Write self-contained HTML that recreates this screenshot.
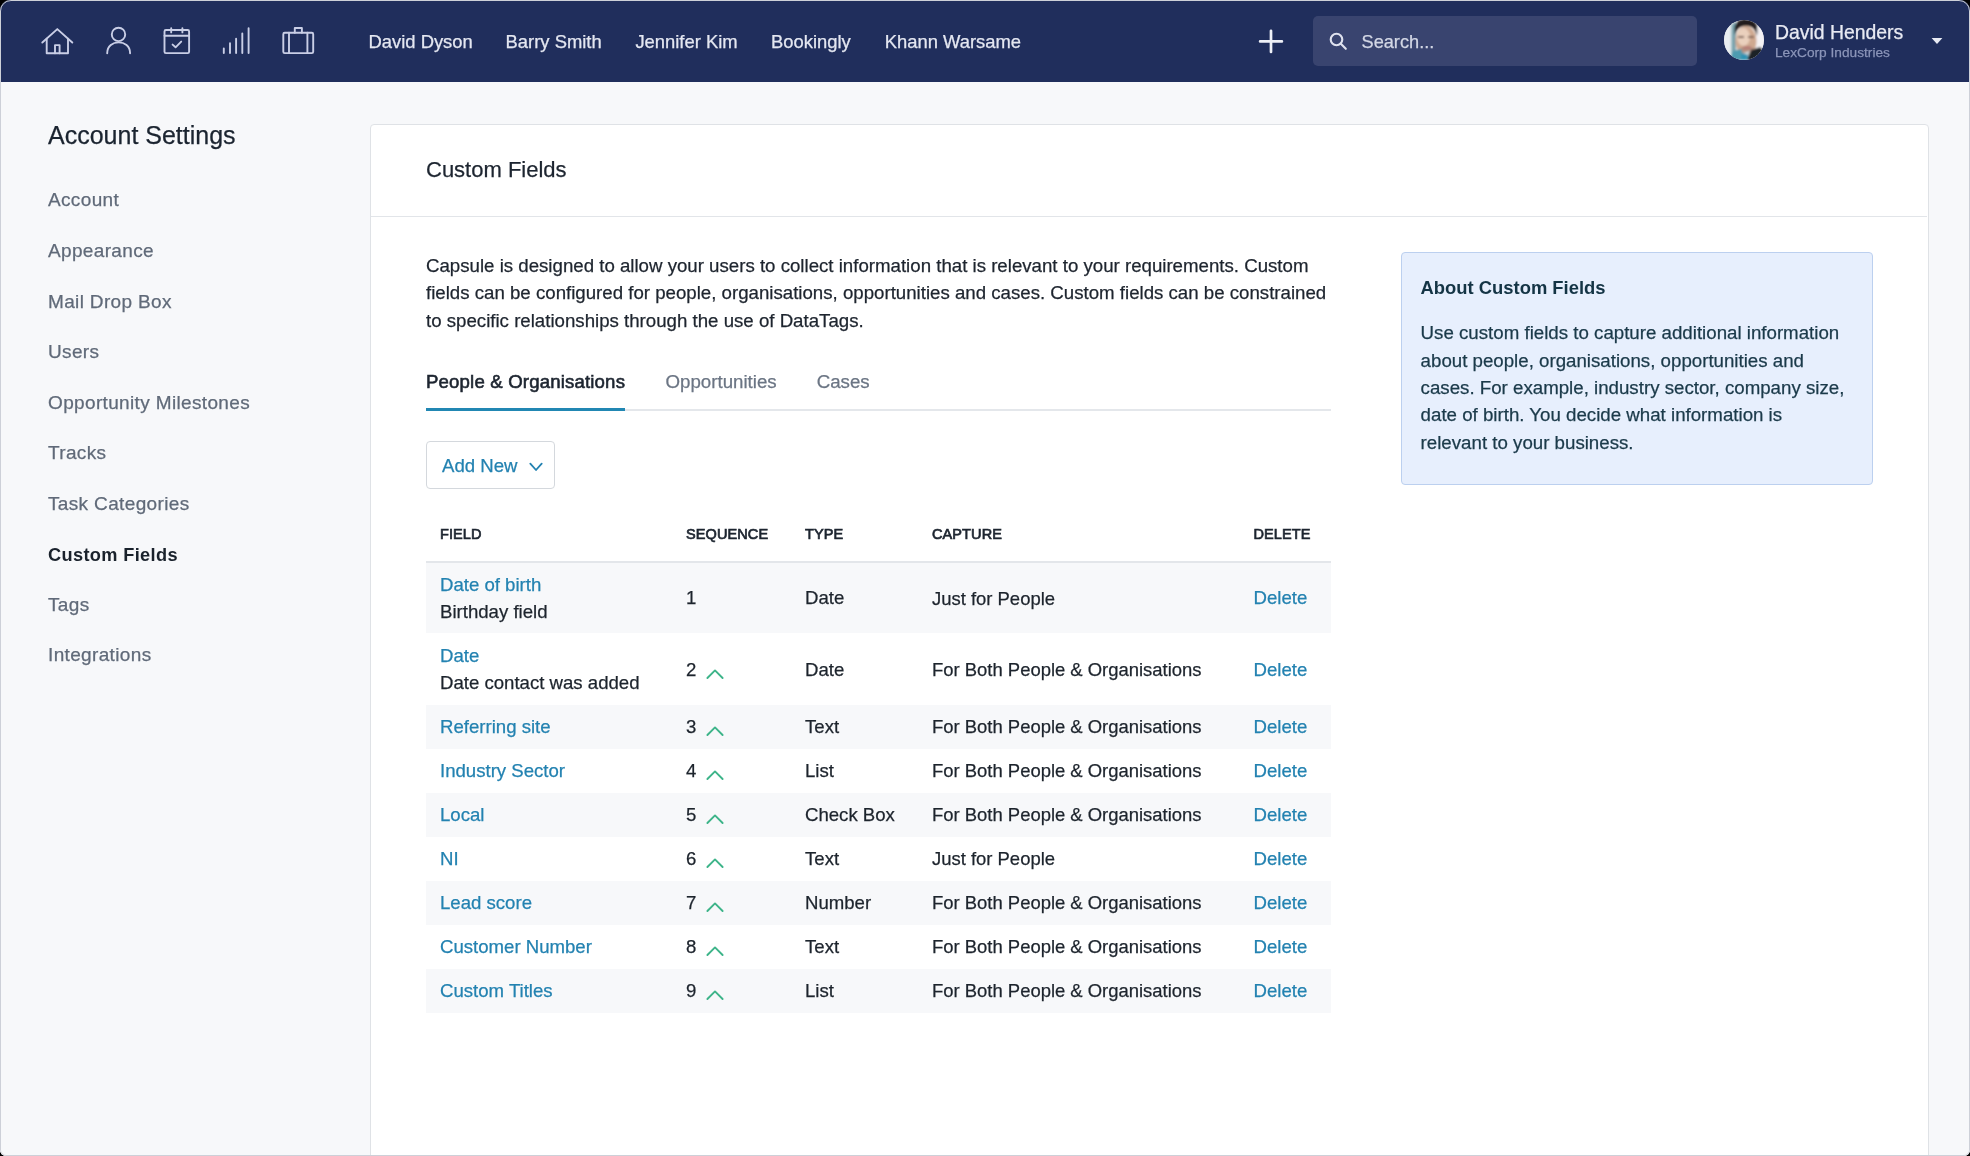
<!DOCTYPE html>
<html><head><meta charset="utf-8"><style>
html,body{margin:0;padding:0;background:#000;width:1970px;height:1156px;overflow:hidden}
.win{position:absolute;left:0;top:0;width:1970px;height:1156px;will-change:transform;border-radius:11px 11px 6px 6px;overflow:hidden;background:#f7f8fa}
.r{position:absolute}
.t{position:absolute;white-space:nowrap;font-family:"Liberation Sans",sans-serif;-webkit-font-smoothing:antialiased;-webkit-text-stroke:0.25px currentColor}
.edge{position:absolute;left:0;top:0;width:1970px;height:1156px;box-sizing:border-box;border:1px solid #cdd0d8;border-radius:11px 11px 6px 6px;pointer-events:none}
</style></head><body><div class="win">
<div class="r" style="left:0;top:0;width:1970px;height:82px;background:#202e5c"></div>
<svg class="r" style="left:0;top:0" width="340" height="82" viewBox="0 0 340 82" fill="none" stroke="#c9cee6" stroke-width="1.9" stroke-linecap="round" stroke-linejoin="round">
<path d="M42.3 42.5 L57.3 29.1 L72.3 42.5"/>
<path d="M46.7 38.6 V53.3 H68 V38.6"/>
<path d="M55 53.3 V45.1 H59.6 V53.3"/>
<circle cx="118.5" cy="34.4" r="6.7"/>
<path d="M107.2 53.2 C107.2 38.8 130.1 38.8 130.1 53.2"/>
<rect x="164.5" y="30" width="24.6" height="23.1" rx="1.4"/>
<path d="M164.5 35.7 H189.1"/>
<path d="M171.2 28.2 V32.4 M182.4 28.2 V32.4"/>
<path d="M172.6 44.6 L175.6 47.3 L181.2 41.6"/>
<path d="M223.8 48.4 V53 M230 43.3 V53 M236.1 38.7 V53 M242.3 33.4 V53 M248.6 28.3 V53"/>
<rect x="283.3" y="32.8" width="29.9" height="20.3" rx="1.4"/>
<path d="M289 32.8 V53.1 M307.4 32.8 V53.1"/>
<path d="M294.8 32.8 V28 H301.9 V32.8"/>
</svg>
<div class="t" style="left:368.5px;top:31.38px;font-size:18.4px;line-height:22.08px;color:#e4e7f1;font-weight:400;letter-spacing:0px;">David Dyson</div>
<div class="t" style="left:505.6px;top:31.38px;font-size:18.4px;line-height:22.08px;color:#e4e7f1;font-weight:400;letter-spacing:0px;">Barry Smith</div>
<div class="t" style="left:635.4px;top:31.38px;font-size:18.4px;line-height:22.08px;color:#e4e7f1;font-weight:400;letter-spacing:0px;">Jennifer Kim</div>
<div class="t" style="left:771px;top:31.38px;font-size:18.4px;line-height:22.08px;color:#e4e7f1;font-weight:400;letter-spacing:0px;">Bookingly</div>
<div class="t" style="left:884.8px;top:31.38px;font-size:18.4px;line-height:22.08px;color:#e4e7f1;font-weight:400;letter-spacing:0px;">Khann Warsame</div>
<svg class="r" style="left:1258px;top:28px" width="26" height="26" viewBox="0 0 26 26" stroke="#eef0f7" stroke-width="2.7" stroke-linecap="round"><path d="M13 2.8 V23.9 M2.1 13.4 H23.9"/></svg>
<div class="r" style="left:1313px;top:16px;width:384px;height:50px;background:#39446f;border-radius:5px"></div>
<svg class="r" style="left:1326px;top:31px" width="24" height="24" viewBox="0 0 24 24" fill="none" stroke="#dfe2ee" stroke-width="2.1" stroke-linecap="round"><circle cx="10.5" cy="8.5" r="5.8"/><path d="M14.6 12.6 L19.8 17.8"/></svg>
<div class="t" style="left:1361.5px;top:31.77px;font-size:18.2px;line-height:21.84px;color:#d3d7e5;font-weight:400;letter-spacing:0px;">Search...</div>
<svg class="r" style="left:1724px;top:20px" width="40" height="40" viewBox="0 0 40 40">
<defs><clipPath id="av"><circle cx="20" cy="20" r="20"/></clipPath><filter id="bl" x="-20%" y="-20%" width="140%" height="140%"><feGaussianBlur stdDeviation="0.9"/></filter></defs>
<g clip-path="url(#av)"><rect width="40" height="40" fill="#eef0f3"/>
<g filter="url(#bl)">
<rect x="0" y="0" width="12" height="40" fill="#e9eef1"/>
<rect x="7" y="4" width="4" height="30" fill="#8fb4bd"/>
<rect x="9.5" y="2" width="2" height="32" fill="#5f8f9c"/>
<rect x="32" y="8" width="8" height="26" fill="#f4f2f4"/>
<ellipse cx="22" cy="21" rx="10.5" ry="15" fill="#cfa990"/>
<ellipse cx="19.5" cy="17" rx="6.5" ry="9" fill="#ead0bd"/>
<ellipse cx="23" cy="30" rx="7" ry="4" fill="#b39080"/>
<path d="M11 15 C9 2 15 -1 22 -1 C30 -1 35 3 33 16 C31 8 28 6 22 6 C16 6 13 8 11 15 Z" fill="#241e1e"/>
<rect x="14" y="16" width="6" height="2" fill="#7b5e52"/>
<rect x="24" y="16" width="6" height="2" fill="#7b5e52"/>
<ellipse cx="23" cy="27.5" rx="4.5" ry="1.6" fill="#b87c76"/>
<path d="M5 40 L9 31 L17 29 L21 40 Z" fill="#4d9bb0"/>
<path d="M17 34 L25 32 L23 40 L17 40 Z" fill="#2e93b3"/>
<path d="M19 33 L26 31 L24 35 Z" fill="#cfd8da"/>
<path d="M23 40 L27 30 L36 27 L42 32 L42 40 Z" fill="#1f2326"/>
</g></g></svg>
<div class="t" style="left:1775px;top:21.24px;font-size:19.4px;line-height:23.28px;color:#e8eaf3;font-weight:400;letter-spacing:0px;">David Henders</div>
<div class="t" style="left:1775px;top:44.63px;font-size:13.7px;line-height:16.44px;color:#8b95b9;font-weight:400;letter-spacing:0px;">LexCorp Industries</div>
<svg class="r" style="left:1930px;top:36px" width="14" height="9" viewBox="0 0 14 9"><path d="M1.6 2 H12.4 L7 8 Z" fill="#e8eaf3"/></svg>
<div class="r" style="left:0;top:82px;width:1970px;height:1074px;background:#f7f8fa"></div>
<div class="t" style="left:48px;top:120.04px;font-size:25px;line-height:30.0px;color:#1b2430;font-weight:400;letter-spacing:0px;">Account Settings</div>
<div class="t" style="left:48px;top:189.42px;font-size:19px;line-height:22.8px;color:#606a79;font-weight:400;letter-spacing:0.35px;">Account</div>
<div class="t" style="left:48px;top:239.97px;font-size:19px;line-height:22.8px;color:#606a79;font-weight:400;letter-spacing:0.35px;">Appearance</div>
<div class="t" style="left:48px;top:290.52px;font-size:19px;line-height:22.8px;color:#606a79;font-weight:400;letter-spacing:0.35px;">Mail Drop Box</div>
<div class="t" style="left:48px;top:341.07px;font-size:19px;line-height:22.8px;color:#606a79;font-weight:400;letter-spacing:0.35px;">Users</div>
<div class="t" style="left:48px;top:391.62px;font-size:19px;line-height:22.8px;color:#606a79;font-weight:400;letter-spacing:0.35px;">Opportunity Milestones</div>
<div class="t" style="left:48px;top:442.17px;font-size:19px;line-height:22.8px;color:#606a79;font-weight:400;letter-spacing:0.35px;">Tracks</div>
<div class="t" style="left:48px;top:492.72px;font-size:19px;line-height:22.8px;color:#606a79;font-weight:400;letter-spacing:0.35px;">Task Categories</div>
<div class="t" style="left:48px;top:545.12px;font-size:18.2px;line-height:21.84px;color:#1a222c;font-weight:700;letter-spacing:0.35px;-webkit-text-stroke:0;">Custom Fields</div>
<div class="t" style="left:48px;top:593.82px;font-size:19px;line-height:22.8px;color:#606a79;font-weight:400;letter-spacing:0.35px;">Tags</div>
<div class="t" style="left:48px;top:644.37px;font-size:19px;line-height:22.8px;color:#606a79;font-weight:400;letter-spacing:0.35px;">Integrations</div>
<div class="r" style="left:370px;top:124px;width:1557px;height:1060px;background:#fff;border:1px solid #dfe2e6;border-radius:4px"></div>
<div class="t" style="left:426px;top:156.78px;font-size:22px;line-height:26.4px;color:#1d2530;font-weight:400;letter-spacing:0px;">Custom Fields</div>
<div class="r" style="left:371px;top:216px;width:1556px;height:1px;background:#e2e5e9"></div>
<div class="t" style="left:426px;top:254.64px;font-size:18.66px;line-height:22.39px;color:#1e252f;font-weight:400;letter-spacing:0px;">Capsule is designed to allow your users to collect information that is relevant to your requirements. Custom</div>
<div class="t" style="left:426px;top:282.09px;font-size:18.66px;line-height:22.39px;color:#1e252f;font-weight:400;letter-spacing:0px;">fields can be configured for people, organisations, opportunities and cases. Custom fields can be constrained</div>
<div class="t" style="left:426px;top:309.54px;font-size:18.66px;line-height:22.39px;color:#1e252f;font-weight:400;letter-spacing:0px;">to specific relationships through the use of DataTags.</div>
<div class="t" style="left:426px;top:370.90px;font-size:18.6px;line-height:22.32px;color:#1d2530;font-weight:400;letter-spacing:0.17px;-webkit-text-stroke:0.6px currentColor;">People &amp; Organisations</div>
<div class="t" style="left:665.5px;top:370.80px;font-size:18.7px;line-height:22.44px;color:#6b7584;font-weight:400;letter-spacing:0px;">Opportunities</div>
<div class="t" style="left:816.7px;top:370.80px;font-size:18.7px;line-height:22.44px;color:#6b7584;font-weight:400;letter-spacing:0px;">Cases</div>
<div class="r" style="left:426px;top:409px;width:905px;height:2px;background:#e4e7eb"></div>
<div class="r" style="left:426px;top:408px;width:199px;height:3px;background:#2187b3"></div>
<div class="r" style="left:426px;top:441px;width:127px;height:46px;border:1px solid #d4d8dd;border-radius:4px;background:#fff"></div>
<div class="t" style="left:442px;top:454.70px;font-size:18.6px;line-height:22.32px;color:#2382b1;font-weight:400;letter-spacing:0px;">Add New</div>
<svg class="r" style="left:527px;top:460px" width="18" height="14" viewBox="0 0 18 14" fill="none" stroke="#2382b1" stroke-width="1.8" stroke-linecap="round" stroke-linejoin="round"><path d="M3.3 3.6 L9 10 L14.7 3.6"/></svg>
<div class="t" style="left:440px;top:525.88px;font-size:14.5px;line-height:17.4px;color:#1d2530;font-weight:400;letter-spacing:0.1px;-webkit-text-stroke:0.7px currentColor;">FIELD</div>
<div class="t" style="left:686px;top:525.88px;font-size:14.5px;line-height:17.4px;color:#1d2530;font-weight:400;letter-spacing:0.1px;-webkit-text-stroke:0.7px currentColor;">SEQUENCE</div>
<div class="t" style="left:805px;top:525.88px;font-size:14.5px;line-height:17.4px;color:#1d2530;font-weight:400;letter-spacing:0.1px;-webkit-text-stroke:0.7px currentColor;">TYPE</div>
<div class="t" style="left:932px;top:525.88px;font-size:14.5px;line-height:17.4px;color:#1d2530;font-weight:400;letter-spacing:0.1px;-webkit-text-stroke:0.7px currentColor;">CAPTURE</div>
<div class="t" style="left:1253.5px;top:525.88px;font-size:14.5px;line-height:17.4px;color:#1d2530;font-weight:400;letter-spacing:0.1px;-webkit-text-stroke:0.7px currentColor;">DELETE</div>
<div class="r" style="left:426px;top:561px;width:905px;height:2px;background:#e3e6ea"></div>
<div class="r" style="left:426px;top:563px;width:905px;height:70px;background:#f7f8fa"></div>
<div class="t" style="left:440px;top:573.80px;font-size:18.6px;line-height:22.32px;color:#2382b1;font-weight:400;letter-spacing:0px;">Date of birth</div>
<div class="t" style="left:440px;top:600.90px;font-size:18.6px;line-height:22.32px;color:#1d242d;font-weight:400;letter-spacing:0px;">Birthday field</div>
<div class="t" style="left:686px;top:587.40px;font-size:18.6px;line-height:22.32px;color:#1d242d;font-weight:400;letter-spacing:0px;">1</div>
<div class="t" style="left:805px;top:587.40px;font-size:18.6px;line-height:22.32px;color:#1d242d;font-weight:400;letter-spacing:0px;">Date</div>
<div class="t" style="left:932px;top:587.55px;font-size:18.44px;line-height:22.13px;color:#1d242d;font-weight:400;letter-spacing:0px;">Just for People</div>
<div class="t" style="left:1253.5px;top:587.40px;font-size:18.6px;line-height:22.32px;color:#2382b1;font-weight:400;letter-spacing:0px;">Delete</div>
<div class="t" style="left:440px;top:645.10px;font-size:18.6px;line-height:22.32px;color:#2382b1;font-weight:400;letter-spacing:0px;">Date</div>
<div class="t" style="left:440px;top:672.20px;font-size:18.6px;line-height:22.32px;color:#1d242d;font-weight:400;letter-spacing:0px;">Date contact was added</div>
<div class="t" style="left:686px;top:658.70px;font-size:18.6px;line-height:22.32px;color:#1d242d;font-weight:400;letter-spacing:0px;">2</div>
<svg class="r" style="left:704px;top:667.9px" width="22" height="14" viewBox="0 0 22 14" fill="none" stroke="#3db489" stroke-width="1.9" stroke-linecap="round" stroke-linejoin="round"><path d="M3.4 10 L11 2.4 L18.6 10"/></svg>
<div class="t" style="left:805px;top:658.70px;font-size:18.6px;line-height:22.32px;color:#1d242d;font-weight:400;letter-spacing:0px;">Date</div>
<div class="t" style="left:932px;top:658.85px;font-size:18.44px;line-height:22.13px;color:#1d242d;font-weight:400;letter-spacing:0px;">For Both People &amp; Organisations</div>
<div class="t" style="left:1253.5px;top:658.70px;font-size:18.6px;line-height:22.32px;color:#2382b1;font-weight:400;letter-spacing:0px;">Delete</div>
<div class="r" style="left:426px;top:705px;width:905px;height:44px;background:#f7f8fa"></div>
<div class="t" style="left:440px;top:715.60px;font-size:18.6px;line-height:22.32px;color:#2382b1;font-weight:400;letter-spacing:0px;">Referring site</div>
<div class="t" style="left:686px;top:715.60px;font-size:18.6px;line-height:22.32px;color:#1d242d;font-weight:400;letter-spacing:0px;">3</div>
<svg class="r" style="left:704px;top:724.8px" width="22" height="14" viewBox="0 0 22 14" fill="none" stroke="#3db489" stroke-width="1.9" stroke-linecap="round" stroke-linejoin="round"><path d="M3.4 10 L11 2.4 L18.6 10"/></svg>
<div class="t" style="left:805px;top:715.60px;font-size:18.6px;line-height:22.32px;color:#1d242d;font-weight:400;letter-spacing:0px;">Text</div>
<div class="t" style="left:932px;top:715.75px;font-size:18.44px;line-height:22.13px;color:#1d242d;font-weight:400;letter-spacing:0px;">For Both People &amp; Organisations</div>
<div class="t" style="left:1253.5px;top:715.60px;font-size:18.6px;line-height:22.32px;color:#2382b1;font-weight:400;letter-spacing:0px;">Delete</div>
<div class="t" style="left:440px;top:759.60px;font-size:18.6px;line-height:22.32px;color:#2382b1;font-weight:400;letter-spacing:0px;">Industry Sector</div>
<div class="t" style="left:686px;top:759.60px;font-size:18.6px;line-height:22.32px;color:#1d242d;font-weight:400;letter-spacing:0px;">4</div>
<svg class="r" style="left:704px;top:768.8px" width="22" height="14" viewBox="0 0 22 14" fill="none" stroke="#3db489" stroke-width="1.9" stroke-linecap="round" stroke-linejoin="round"><path d="M3.4 10 L11 2.4 L18.6 10"/></svg>
<div class="t" style="left:805px;top:759.60px;font-size:18.6px;line-height:22.32px;color:#1d242d;font-weight:400;letter-spacing:0px;">List</div>
<div class="t" style="left:932px;top:759.75px;font-size:18.44px;line-height:22.13px;color:#1d242d;font-weight:400;letter-spacing:0px;">For Both People &amp; Organisations</div>
<div class="t" style="left:1253.5px;top:759.60px;font-size:18.6px;line-height:22.32px;color:#2382b1;font-weight:400;letter-spacing:0px;">Delete</div>
<div class="r" style="left:426px;top:793px;width:905px;height:44px;background:#f7f8fa"></div>
<div class="t" style="left:440px;top:803.60px;font-size:18.6px;line-height:22.32px;color:#2382b1;font-weight:400;letter-spacing:0px;">Local</div>
<div class="t" style="left:686px;top:803.60px;font-size:18.6px;line-height:22.32px;color:#1d242d;font-weight:400;letter-spacing:0px;">5</div>
<svg class="r" style="left:704px;top:812.8px" width="22" height="14" viewBox="0 0 22 14" fill="none" stroke="#3db489" stroke-width="1.9" stroke-linecap="round" stroke-linejoin="round"><path d="M3.4 10 L11 2.4 L18.6 10"/></svg>
<div class="t" style="left:805px;top:803.60px;font-size:18.6px;line-height:22.32px;color:#1d242d;font-weight:400;letter-spacing:0px;">Check Box</div>
<div class="t" style="left:932px;top:803.75px;font-size:18.44px;line-height:22.13px;color:#1d242d;font-weight:400;letter-spacing:0px;">For Both People &amp; Organisations</div>
<div class="t" style="left:1253.5px;top:803.60px;font-size:18.6px;line-height:22.32px;color:#2382b1;font-weight:400;letter-spacing:0px;">Delete</div>
<div class="t" style="left:440px;top:847.60px;font-size:18.6px;line-height:22.32px;color:#2382b1;font-weight:400;letter-spacing:0px;">NI</div>
<div class="t" style="left:686px;top:847.60px;font-size:18.6px;line-height:22.32px;color:#1d242d;font-weight:400;letter-spacing:0px;">6</div>
<svg class="r" style="left:704px;top:856.8px" width="22" height="14" viewBox="0 0 22 14" fill="none" stroke="#3db489" stroke-width="1.9" stroke-linecap="round" stroke-linejoin="round"><path d="M3.4 10 L11 2.4 L18.6 10"/></svg>
<div class="t" style="left:805px;top:847.60px;font-size:18.6px;line-height:22.32px;color:#1d242d;font-weight:400;letter-spacing:0px;">Text</div>
<div class="t" style="left:932px;top:847.75px;font-size:18.44px;line-height:22.13px;color:#1d242d;font-weight:400;letter-spacing:0px;">Just for People</div>
<div class="t" style="left:1253.5px;top:847.60px;font-size:18.6px;line-height:22.32px;color:#2382b1;font-weight:400;letter-spacing:0px;">Delete</div>
<div class="r" style="left:426px;top:881px;width:905px;height:44px;background:#f7f8fa"></div>
<div class="t" style="left:440px;top:891.60px;font-size:18.6px;line-height:22.32px;color:#2382b1;font-weight:400;letter-spacing:0px;">Lead score</div>
<div class="t" style="left:686px;top:891.60px;font-size:18.6px;line-height:22.32px;color:#1d242d;font-weight:400;letter-spacing:0px;">7</div>
<svg class="r" style="left:704px;top:900.8px" width="22" height="14" viewBox="0 0 22 14" fill="none" stroke="#3db489" stroke-width="1.9" stroke-linecap="round" stroke-linejoin="round"><path d="M3.4 10 L11 2.4 L18.6 10"/></svg>
<div class="t" style="left:805px;top:891.60px;font-size:18.6px;line-height:22.32px;color:#1d242d;font-weight:400;letter-spacing:0px;">Number</div>
<div class="t" style="left:932px;top:891.75px;font-size:18.44px;line-height:22.13px;color:#1d242d;font-weight:400;letter-spacing:0px;">For Both People &amp; Organisations</div>
<div class="t" style="left:1253.5px;top:891.60px;font-size:18.6px;line-height:22.32px;color:#2382b1;font-weight:400;letter-spacing:0px;">Delete</div>
<div class="t" style="left:440px;top:935.60px;font-size:18.6px;line-height:22.32px;color:#2382b1;font-weight:400;letter-spacing:0px;">Customer Number</div>
<div class="t" style="left:686px;top:935.60px;font-size:18.6px;line-height:22.32px;color:#1d242d;font-weight:400;letter-spacing:0px;">8</div>
<svg class="r" style="left:704px;top:944.8px" width="22" height="14" viewBox="0 0 22 14" fill="none" stroke="#3db489" stroke-width="1.9" stroke-linecap="round" stroke-linejoin="round"><path d="M3.4 10 L11 2.4 L18.6 10"/></svg>
<div class="t" style="left:805px;top:935.60px;font-size:18.6px;line-height:22.32px;color:#1d242d;font-weight:400;letter-spacing:0px;">Text</div>
<div class="t" style="left:932px;top:935.75px;font-size:18.44px;line-height:22.13px;color:#1d242d;font-weight:400;letter-spacing:0px;">For Both People &amp; Organisations</div>
<div class="t" style="left:1253.5px;top:935.60px;font-size:18.6px;line-height:22.32px;color:#2382b1;font-weight:400;letter-spacing:0px;">Delete</div>
<div class="r" style="left:426px;top:969px;width:905px;height:44px;background:#f7f8fa"></div>
<div class="t" style="left:440px;top:979.60px;font-size:18.6px;line-height:22.32px;color:#2382b1;font-weight:400;letter-spacing:0px;">Custom Titles</div>
<div class="t" style="left:686px;top:979.60px;font-size:18.6px;line-height:22.32px;color:#1d242d;font-weight:400;letter-spacing:0px;">9</div>
<svg class="r" style="left:704px;top:988.8px" width="22" height="14" viewBox="0 0 22 14" fill="none" stroke="#3db489" stroke-width="1.9" stroke-linecap="round" stroke-linejoin="round"><path d="M3.4 10 L11 2.4 L18.6 10"/></svg>
<div class="t" style="left:805px;top:979.60px;font-size:18.6px;line-height:22.32px;color:#1d242d;font-weight:400;letter-spacing:0px;">List</div>
<div class="t" style="left:932px;top:979.75px;font-size:18.44px;line-height:22.13px;color:#1d242d;font-weight:400;letter-spacing:0px;">For Both People &amp; Organisations</div>
<div class="t" style="left:1253.5px;top:979.60px;font-size:18.6px;line-height:22.32px;color:#2382b1;font-weight:400;letter-spacing:0px;">Delete</div>
<div class="r" style="left:1401px;top:252px;width:470px;height:231px;background:#e7effd;border:1px solid #bcd0ef;border-radius:4px"></div>
<div class="t" style="left:1420.6px;top:276.88px;font-size:18.4px;line-height:22.08px;color:#143445;font-weight:700;letter-spacing:0px;-webkit-text-stroke:0;">About Custom Fields</div>
<div class="t" style="left:1420.6px;top:322.20px;font-size:18.7px;line-height:22.44px;color:#1b3a4a;font-weight:400;letter-spacing:0px;">Use custom fields to capture additional information</div>
<div class="t" style="left:1420.6px;top:349.60px;font-size:18.7px;line-height:22.44px;color:#1b3a4a;font-weight:400;letter-spacing:0px;">about people, organisations, opportunities and</div>
<div class="t" style="left:1420.6px;top:377.00px;font-size:18.7px;line-height:22.44px;color:#1b3a4a;font-weight:400;letter-spacing:0px;">cases. For example, industry sector, company size,</div>
<div class="t" style="left:1420.6px;top:404.40px;font-size:18.7px;line-height:22.44px;color:#1b3a4a;font-weight:400;letter-spacing:0px;">date of birth. You decide what information is</div>
<div class="t" style="left:1420.6px;top:431.80px;font-size:18.7px;line-height:22.44px;color:#1b3a4a;font-weight:400;letter-spacing:0px;">relevant to your business.</div>
<div class="edge"></div>
</div></body></html>
